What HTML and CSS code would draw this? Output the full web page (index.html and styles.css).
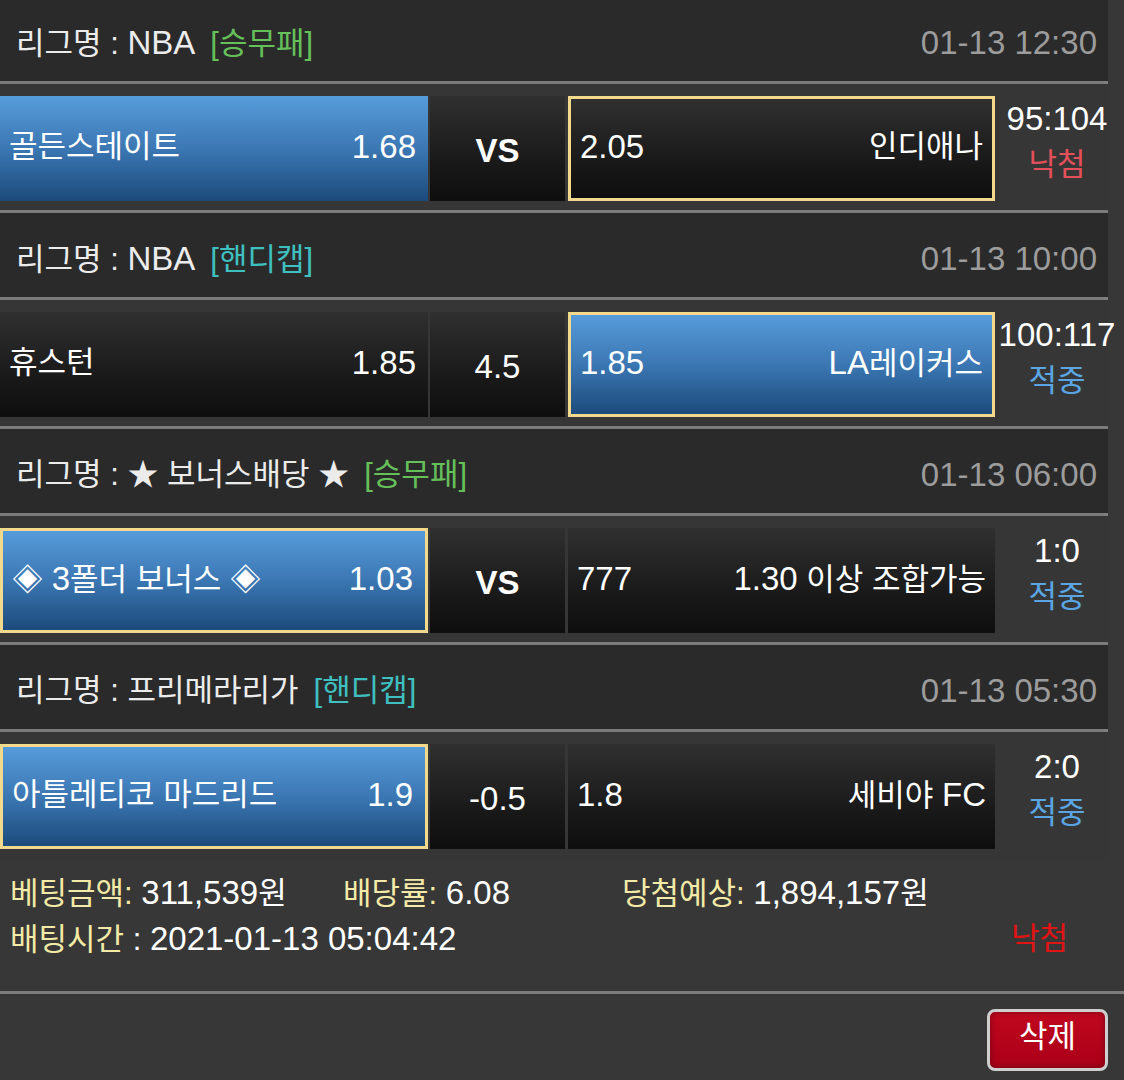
FILE: index.html
```html
<!DOCTYPE html>
<html lang="ko">
<head>
<meta charset="utf-8">
<title>베팅내역</title>
<link rel="stylesheet" href="styles.css">
</head>
<body>
<div class="slip">
  <div class="matches">
    <section class="match">
      <div class="league">
        <div class="league-name">리그명 : <span class="n">NBA</span><span class="type green">[승무패]</span></div>
        <div class="date n">01-13 12:30</div>
      </div>
      <div class="bets">
        <div class="pick blue"><span>골든스테이트</span><span class="n">1.68</span></div>
        <div class="mid dark"><b class="n">VS</b></div>
        <div class="pick dark sel"><span class="n">2.05</span><span>인디애나</span></div>
        <div class="result"><span class="n">95:104</span><span class="lose">낙첨</span></div>
      </div>
    </section>
    <section class="match">
      <div class="league">
        <div class="league-name">리그명 : <span class="n">NBA</span><span class="type cyan">[핸디캡]</span></div>
        <div class="date n">01-13 10:00</div>
      </div>
      <div class="bets">
        <div class="pick dark"><span>휴스턴</span><span class="n">1.85</span></div>
        <div class="mid dark"><span class="n">4.5</span></div>
        <div class="pick blue sel"><span class="n">1.85</span><span><span class="n">LA</span>레이커스</span></div>
        <div class="result"><span class="n">100:117</span><span class="win">적중</span></div>
      </div>
    </section>
    <section class="match">
      <div class="league">
        <div class="league-name">리그명 : ★ 보너스배당 ★<span class="type green">[승무패]</span></div>
        <div class="date n">01-13 06:00</div>
      </div>
      <div class="bets">
        <div class="pick blue sel"><span>◈ <span class="n">3</span>폴더 보너스 ◈</span><span class="n">1.03</span></div>
        <div class="mid dark"><b class="n">VS</b></div>
        <div class="pick dark"><span class="n">777</span><span><span class="n">1.30</span> 이상 조합가능</span></div>
        <div class="result"><span class="n">1:0</span><span class="win">적중</span></div>
      </div>
    </section>
    <section class="match last">
      <div class="league">
        <div class="league-name">리그명 : 프리메라리가<span class="type cyan">[핸디캡]</span></div>
        <div class="date n">01-13 05:30</div>
      </div>
      <div class="bets">
        <div class="pick blue sel"><span>아틀레티코 마드리드</span><span class="n">1.9</span></div>
        <div class="mid dark"><span class="n">-0.5</span></div>
        <div class="pick dark"><span class="n">1.8</span><span>세비야 <span class="n">FC</span></span></div>
        <div class="result"><span class="n">2:0</span><span class="win">적중</span></div>
      </div>
    </section>
  </div>
  <div class="summary">
    <div class="sum-row">
      <div class="sum-cell amount"><span class="label">베팅금액:</span> <span class="n">311,539</span>원</div>
      <div class="sum-cell rate"><span class="label">배당률:</span> <span class="n">6.08</span></div>
      <div class="sum-cell"><span class="label">당첨예상:</span> <span class="n">1,894,157</span>원</div>
    </div>
    <div class="sum-row split">
      <div class="sum-cell"><span class="label">배팅시간</span> : <span class="n">2021-01-13 05:04:42</span></div>
      <div class="sum-status">낙첨</div>
    </div>
  </div>
  <div class="footer">
    <button class="delete" type="button">삭제</button>
  </div>
</div>
</body>
</html>
```

FILE: styles.css
```css
html, body {
  margin: 0;
  padding: 0;
}
body {
  background: #373737;
  font-family: "Liberation Sans", "Noto Sans CJK KR", sans-serif;
  font-size: 31px;
  color: #ffffff;
  width: 1124px;
  height: 1080px;
  overflow: hidden;
}
.n {
  font-size: 33px;
}
.slip {
  width: 1124px;
}
.matches {
  width: 1108px;
  margin-top: -3px;
}
.league {
  height: 87px;
  background: #2a2a2a;
  border-bottom: 3px solid #7c7c7c;
  display: flex;
  align-items: center;
  justify-content: space-between;
  padding: 8px 11px 0 16px;
  box-sizing: border-box;
  color: #ececec;
  line-height: 44px;
}
.league-name {
  white-space: nowrap;
}
.type {
  margin-left: 15px;
}
.type.green {
  color: #66c05a;
}
.type.cyan {
  color: #3fc0c0;
}
.date {
  color: #9c9c9c;
}
.bets {
  height: 129px;
  box-sizing: border-box;
  padding: 12px 0 9px;
  border-bottom: 3px solid #7c7c7c;
  background: #363636;
  display: flex;
}
.match.last .bets {
  height: 126px;
  border-bottom: none;
}
.bets > * {
  flex-shrink: 0;
}
.pick {
  height: 105px;
  box-sizing: border-box;
  display: flex;
  align-items: center;
  justify-content: space-between;
  padding: 0 11px 3px 9px;
  white-space: nowrap;
  line-height: 44px;
}
.pick:first-child {
  width: 428px;
  padding-right: 12px;
}
.pick.sel {
  border: 3px solid #f3d98b;
}
.pick:nth-child(3) {
  width: 427px;
  margin-left: 3px;
  padding-right: 9px;
}
.blue {
  background: linear-gradient(180deg, #579cdb 0%, #3b77b3 50%, #1c4b7b 100%);
}
.dark {
  background: linear-gradient(180deg, #303030 0%, #1a1a1a 60%, #0e0e0e 100%);
}
.mid {
  width: 135px;
  height: 105px;
  margin-left: 2px;
  display: flex;
  align-items: center;
  justify-content: center;
  padding-top: 4px;
  box-sizing: border-box;
  line-height: 44px;
}
.result {
  width: 124px;
  display: flex;
  flex-direction: column;
  align-items: center;
  justify-content: center;
  line-height: 46px;
  white-space: nowrap;
  padding-bottom: 14px;
  box-sizing: border-box;
}
.lose {
  color: #e4505a;
}
.win {
  color: #5aa6e4;
}
.summary {
  padding: 12px 0 29px 10px;
  border-bottom: 3px solid #7c7c7c;
}
.sum-row {
  display: flex;
  height: 46px;
  line-height: 46px;
  align-items: center;
  white-space: nowrap;
}
.sum-cell.amount {
  width: 333px;
}
.sum-cell.rate {
  width: 279px;
}
.sum-row.split {
  justify-content: space-between;
  padding-right: 56px;
}
.label {
  color: #f2eaa6;
}
.sum-status {
  color: #e01414;
}
.footer {
  display: flex;
  justify-content: flex-end;
  padding: 15px 16px 0 0;
}
.delete {
  width: 121px;
  height: 62px;
  border: 3px solid #cfcfcf;
  border-radius: 8px;
  background: linear-gradient(180deg, #c0081f 0%, #aa0018 100%);
  color: #ffffff;
  font-family: "Liberation Sans", "Noto Sans CJK KR", sans-serif;
  font-size: 31px;
  line-height: 40px;
  padding: 0 0 6px;
  box-shadow: inset 0 0 6px rgba(0,0,0,0.35);
}
```
